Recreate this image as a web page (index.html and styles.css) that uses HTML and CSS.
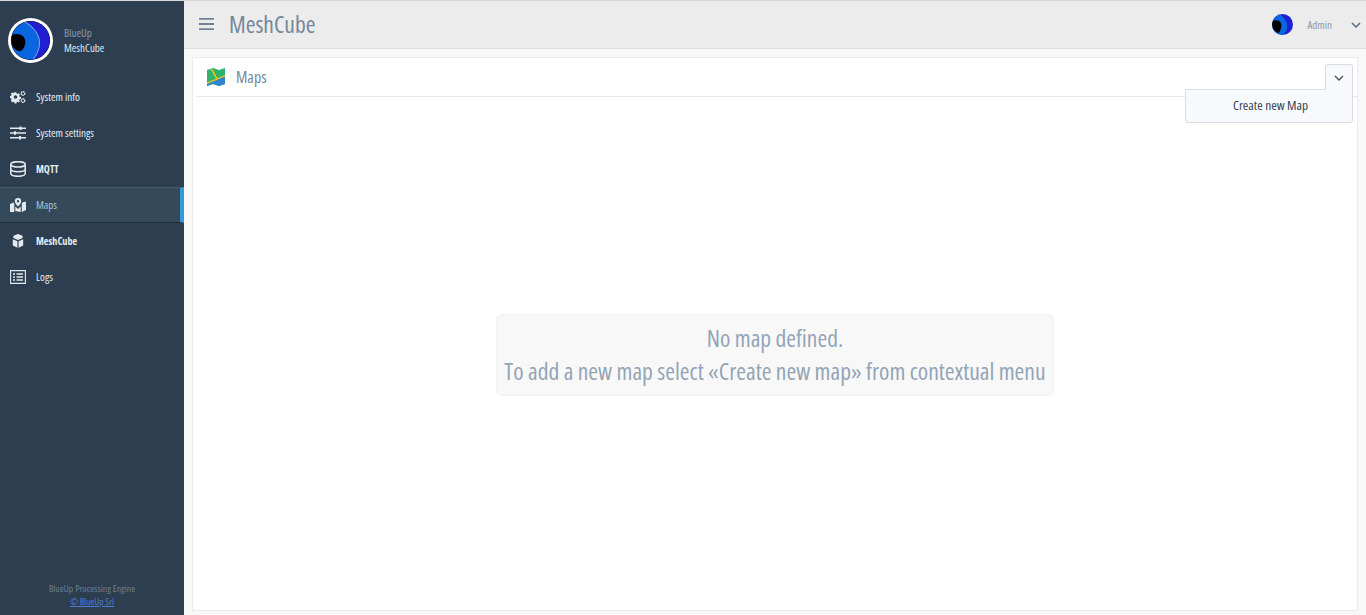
FILE: index.html
```html
<!DOCTYPE html>
<html lang="en">
  <head>
    <meta charset="UTF-8" />
    <meta name="viewport" content="width=device-width, initial-scale=1.0" />
    <title>MeshCube</title>
    <link rel="stylesheet" href="styles.css">
  </head>

  <body>
    <div class="app">
      <aside class="sidebar">
        <div class="brand">
          <svg class="logo" viewBox="0 0 46 46">
            <defs><clipPath id="logoClip"><circle cx="23" cy="23" r="19.500" /></clipPath></defs>
            <circle cx="23" cy="23" r="23" fill="#fff" />
            <circle cx="23" cy="23" r="20" fill="#0b0b14" />
            <g clip-path="url(#logoClip)">
              <rect width="46" height="46" fill="#2020d2" />
              <path d="M0 17L15 2c11 5 19 16 17 27-1 5-3 9-6 14H0z" fill="#0a66e0" />
              <path d="M15 3c11 5 19 15 17 26-1 5-3 9-6 13" fill="none" stroke="#a9c2f4" stroke-width=".8" />
              <path d="M2 18c6-3 13-2 15 3 2 6-1 11-4 13-5 0-9-5-11-10z" fill="#000" />
            </g>
          </svg>
          <div class="brand__text">
            <span class="brand__org">BlueUp</span>
            <span class="brand__app">MeshCube</span>
          </div>
        </div>

        <ul class="menu">
          <li class="menu__item">
            <svg class="menu__icon" viewBox="0 0 18 14">
              <path fill="#e4e9ee" fill-rule="evenodd" d="M5.200 1.600h2l.3 1.500 1 .5 1.400-.7 1.300 1.400-.8 1.300.4 1 1.600.4v2l-1.600.4-.4 1 .8 1.300-1.300 1.400-1.400-.7-1 .5-.3 1.500h-2l-.3-1.500-1-.5-1.400.7L.9 10.700l.8-1.300-.4-1L0 8V6l1.300-.4.4-1L.9 3.300l1.300-1.400 1.400.7 1-.5zM6.200 5a2 2 0 1 0 0 4 2 2 0 0 0 0-4z" />
              <circle cx="14.600" cy="3" r="2" fill="none" stroke="#e4e9ee" stroke-width="1.500" stroke-dasharray="1.600 .5" />
              <circle cx="14.600" cy="11" r="2" fill="none" stroke="#e4e9ee" stroke-width="1.500" stroke-dasharray="1.600 .5" />
            </svg>
            <span>System info</span>
          </li>
          <li class="menu__item">
            <svg class="menu__icon" viewBox="0 0 16 14">
              <path fill="#e4e9ee" d="M0 1.600h16v1.400H0zM0 6.300h16v1.400H0zM0 11h16v1.400H0zM9.500.4h2v3.600h-2zM4 5.200h2v3.600H4zM9 10h2v3.600H9z" />
            </svg>
            <span>System settings</span>
          </li>
          <li class="menu__item menu__item--bold">
            <svg class="menu__icon menu__icon--tall" viewBox="0 0 16 16">
              <g fill="none" stroke="#e4e9ee" stroke-width="1.500">
                <ellipse cx="8" cy="3.400" rx="7.200" ry="2.700" />
                <path d="M.8 3.400v9.200c0 1.500 3.200 2.700 7.200 2.700s7.200-1.200 7.200-2.700V3.400M.8 8c0 1.500 3.200 2.700 7.200 2.700s7.200-1.200 7.200-2.700" />
              </g>
            </svg>
            <span>MQTT</span>
          </li>
          <li class="menu__item menu__item--active">
            <svg class="menu__icon" viewBox="0 0 16 14">
              <path fill="#e4e9ee" fill-rule="evenodd" d="M8 0a3.200 3.200 0 0 1 3.200 3.200C11.200 5 9 7.500 8 8.600 7 7.500 4.800 5 4.800 3.200A3.200 3.200 0 0 1 8 0zm0 2a1.200 1.200 0 1 0 0 2.400A1.200 1.200 0 0 0 8 2zM0 6l3.800-1.500.5 1.500v8L0 14zM5.300 8.500 8 11l2.700-2.500V14l-5.400-1zM11.800 6l.5-1.500L16 3.500V12l-4.200 2z" />
            </svg>
            <span>Maps</span>
          </li>
          <li class="menu__item menu__item--bold">
            <svg class="menu__icon" viewBox="0 0 16 14">
              <path fill="#e4e9ee" d="M8 0l4.600 1.800v2.300L8 5.900 3.400 4.100V1.800zM2.800 5.300l4.600 2v6.500l-4.600-2.300zM13.200 5.300l-4.600 2v6.500l4.600-2.300z" />
            </svg>
            <span>MeshCube</span>
          </li>
          <li class="menu__item">
            <svg class="menu__icon" viewBox="0 0 16 14">
              <path fill="none" stroke="#e4e9ee" stroke-width="1.100" d="M.6.600h14.800v12.800H.6z" />
              <path fill="#e4e9ee" d="M3 3.200h2v1.600H3zM6.500 3.200H13v1.600H6.500zM3 6.200h2v1.600H3zM6.500 6.200H13v1.600H6.500zM3 9.200h2v1.600H3zM6.500 9.200H13v1.600H6.500z" />
            </svg>
            <span>Logs</span>
          </li>
        </ul>

        <footer class="sidebar__foot">
          <div>BlueUp Processing Engine</div>
          <a href="#">© BlueUp Srl</a>
        </footer>
      </aside>

      <div class="main">
        <header class="topbar">
          <svg class="burger" viewBox="0 0 16 14">
            <path fill="#6f8296" d="M0 .5h16v2H0zM0 6h16v2H0zM0 11.500h16v2H0z" />
          </svg>
          <h1 class="topbar__title">MeshCube</h1>
          <div class="user">
            <svg class="user__pic" viewBox="0 0 22 22">
              <defs><clipPath id="userClip"><circle cx="11" cy="11" r="11" /></clipPath></defs>
              <g clip-path="url(#userClip)">
                <rect width="22" height="22" fill="#2020d2" />
                <path d="M0 8L7 0c5 2 9 8 9 13 0 4-2 6-4 9H0z" fill="#0a66e0" />
                <path d="M0 8c3-2 7-2 9 1 2 4 0 8-2 11-3-1-6-4-7-8z" fill="#000" />
              </g>
            </svg>
            <span class="user__name">Admin</span>
            <svg class="chevron" viewBox="0 0 10 6">
              <path fill="none" stroke="#5a6b7c" stroke-width="1.500" d="M1 1l4 4 4-4" />
            </svg>
          </div>
        </header>

        <section class="content">
          <div class="card">
            <div class="card__head">
              <svg class="card__icon" viewBox="0 0 18 18">
                <path fill="#2fb36a" d="M0 2l6-2 6 2 6-2v16l-6 2-6-2-6 2z" />
                <path fill="#2e86d0" d="M0 15.500L18 8v8l-6 2-6-2-6 2z" />
                <path fill="#e8c52a" d="M0 14.500L9 10.800 3.500 1.300l1.500-.6 5.600 9.500L18 7v1.500L0 16z" />
              </svg>
              <span class="card__title">Maps</span>
              <div class="card__toggle">
                <svg class="chevron" viewBox="0 0 10 6">
                  <path fill="none" stroke="#3d4b59" stroke-width="1.300" d="M1 1l4 4 4-4" />
                </svg>
              </div>
              <div class="dropdown">Create new Map</div>
            </div>

            <div class="card__body">
              <div class="empty">
                <p>No map defined.</p>
                <p>To add a new map select «Create new map» from contextual menu</p>
              </div>
            </div>
          </div>
        </section>
      </div>
    </div>
  </body>
</html>
```

FILE: styles.css
```css
* {
  box-sizing: border-box;
}

html,
body {
  height: 100%;
}

body,
h1,
p,
ul {
  margin: 0;
  padding: 0;
  font-weight: normal;
}

ul {
  list-style: none;
}

body {
  font-family: "Open Sans", "Noto Sans", sans-serif;
  font-stretch: 75%;
  color: #8a9bad;
  overflow: hidden;
}

.app {
  display: flex;
  height: 100vh;
}

/* Sidebar */
.sidebar {
  width: 184px;
  flex: none;
  display: flex;
  flex-direction: column;
  background: #2c3e50;
  border-top: 1px solid #d6d6d6;
  color: #e4edf2;
}

.brand {
  display: flex;
  align-items: center;
  height: 78px;
  padding: 0 0 0 8px;
}

.logo {
  width: 45px;
  height: 45px;
  margin-right: 11px;
}

.brand__text {
  display: flex;
  flex-direction: column;
  font-size: 11px;
  line-height: 15px;
}

.brand__org {
  color: #8a9bad;
}

.brand__app {
  color: #dfeaf0;
  font-weight: 500;
}

.menu__item {
  display: flex;
  align-items: center;
  height: 36px;
  padding-left: 10px;
  font-size: 11px;
}

.menu__item span {
  padding-bottom: 2px;
}

.menu__item--bold {
  font-size: 10.2px;
  font-weight: bold;
}

.menu__item--bold span {
  padding-bottom: 0;
}

.menu__item--active {
  background: #34495a;
  border-top: 1px solid #46586a;
  border-bottom: 1px solid #1f2e3c;
  border-right: 4px solid #3498db;
  color: #a9c6d6;
}

.menu__icon {
  width: 16px;
  height: 14px;
  margin-right: 10px;
}

.menu__icon--tall {
  height: 16px;
}

.sidebar__foot {
  margin-top: auto;
  padding-bottom: 7px;
  text-align: center;
  font-size: 9.8px;
  line-height: 13px;
  color: #6b7f92;
}

.sidebar__foot a {
  font-size: 9.5px;
  color: #4d7fd8;
}

/* Top bar */
.main {
  flex: 1;
  min-width: 0;
  display: flex;
  flex-direction: column;
  background: #f8f8f8;
}

.topbar {
  display: flex;
  align-items: center;
  height: 49px;
  padding: 0 5px 0 15px;
  background: #ececec;
  border-top: 1px solid #d6d6d6;
  border-bottom: 1px solid #e0e0e0;
}

.burger {
  width: 15px;
  height: 14px;
  margin-right: 15px;
  margin-top: -2px;
}

.topbar__title {
  font-size: 23.5px;
  padding-bottom: 1px;
  color: #74879a;
}

.user {
  margin-left: auto;
  display: flex;
  align-items: center;
}

.user__pic {
  width: 21px;
  height: 21px;
  margin-right: 14px;
}

.user__name {
  font-size: 11px;
  color: #8a9bad;
  margin-right: 19px;
}

.chevron {
  width: 10px;
  height: 6px;
  display: block;
}

/* Card */
.content {
  flex: 1;
  min-height: 0;
  padding: 8px 8px 4px;
}

.card {
  height: 100%;
  display: flex;
  flex-direction: column;
  background: #fff;
  border: 1px solid #ececec;
}

.card__head {
  position: relative;
  display: flex;
  align-items: center;
  height: 39px;
  margin-left: 4px;
  padding-left: 10px;
  border-bottom: 1px solid #e6e6e6;
}

.card__icon {
  width: 18px;
  height: 18px;
  margin-right: 11px;
}

.card__title {
  font-size: 16px;
  color: #74879a;
}

.card__toggle {
  position: absolute;
  top: 6px;
  right: 4px;
  width: 28px;
  height: 26px;
  display: flex;
  align-items: center;
  justify-content: center;
  background: #f8f9fc;
  border: 1px solid #d9dde3;
  border-bottom: 0;
  border-radius: 3px 3px 0 0;
  z-index: 2;
}

.dropdown {
  position: absolute;
  top: 31px;
  right: 4px;
  width: 168px;
  height: 34px;
  line-height: 30px;
  padding-left: 47px;
  font-size: 13.3px;
  color: #36424e;
  background: #f8f9fc;
  border: 1px solid #d9dde3;
  border-radius: 0 0 3px 3px;
  z-index: 1;
}

.card__body {
  flex: 1;
  display: flex;
  align-items: center;
  justify-content: center;
  padding-top: 3px;
}

.empty {
  padding: 7px;
  text-align: center;
  font-size: 23.6px;
  line-height: 33px;
  color: #93a4b6;
  background: #f8f8f8;
  border: 1px solid #f2f2f2;
  border-radius: 6px;
}
```
